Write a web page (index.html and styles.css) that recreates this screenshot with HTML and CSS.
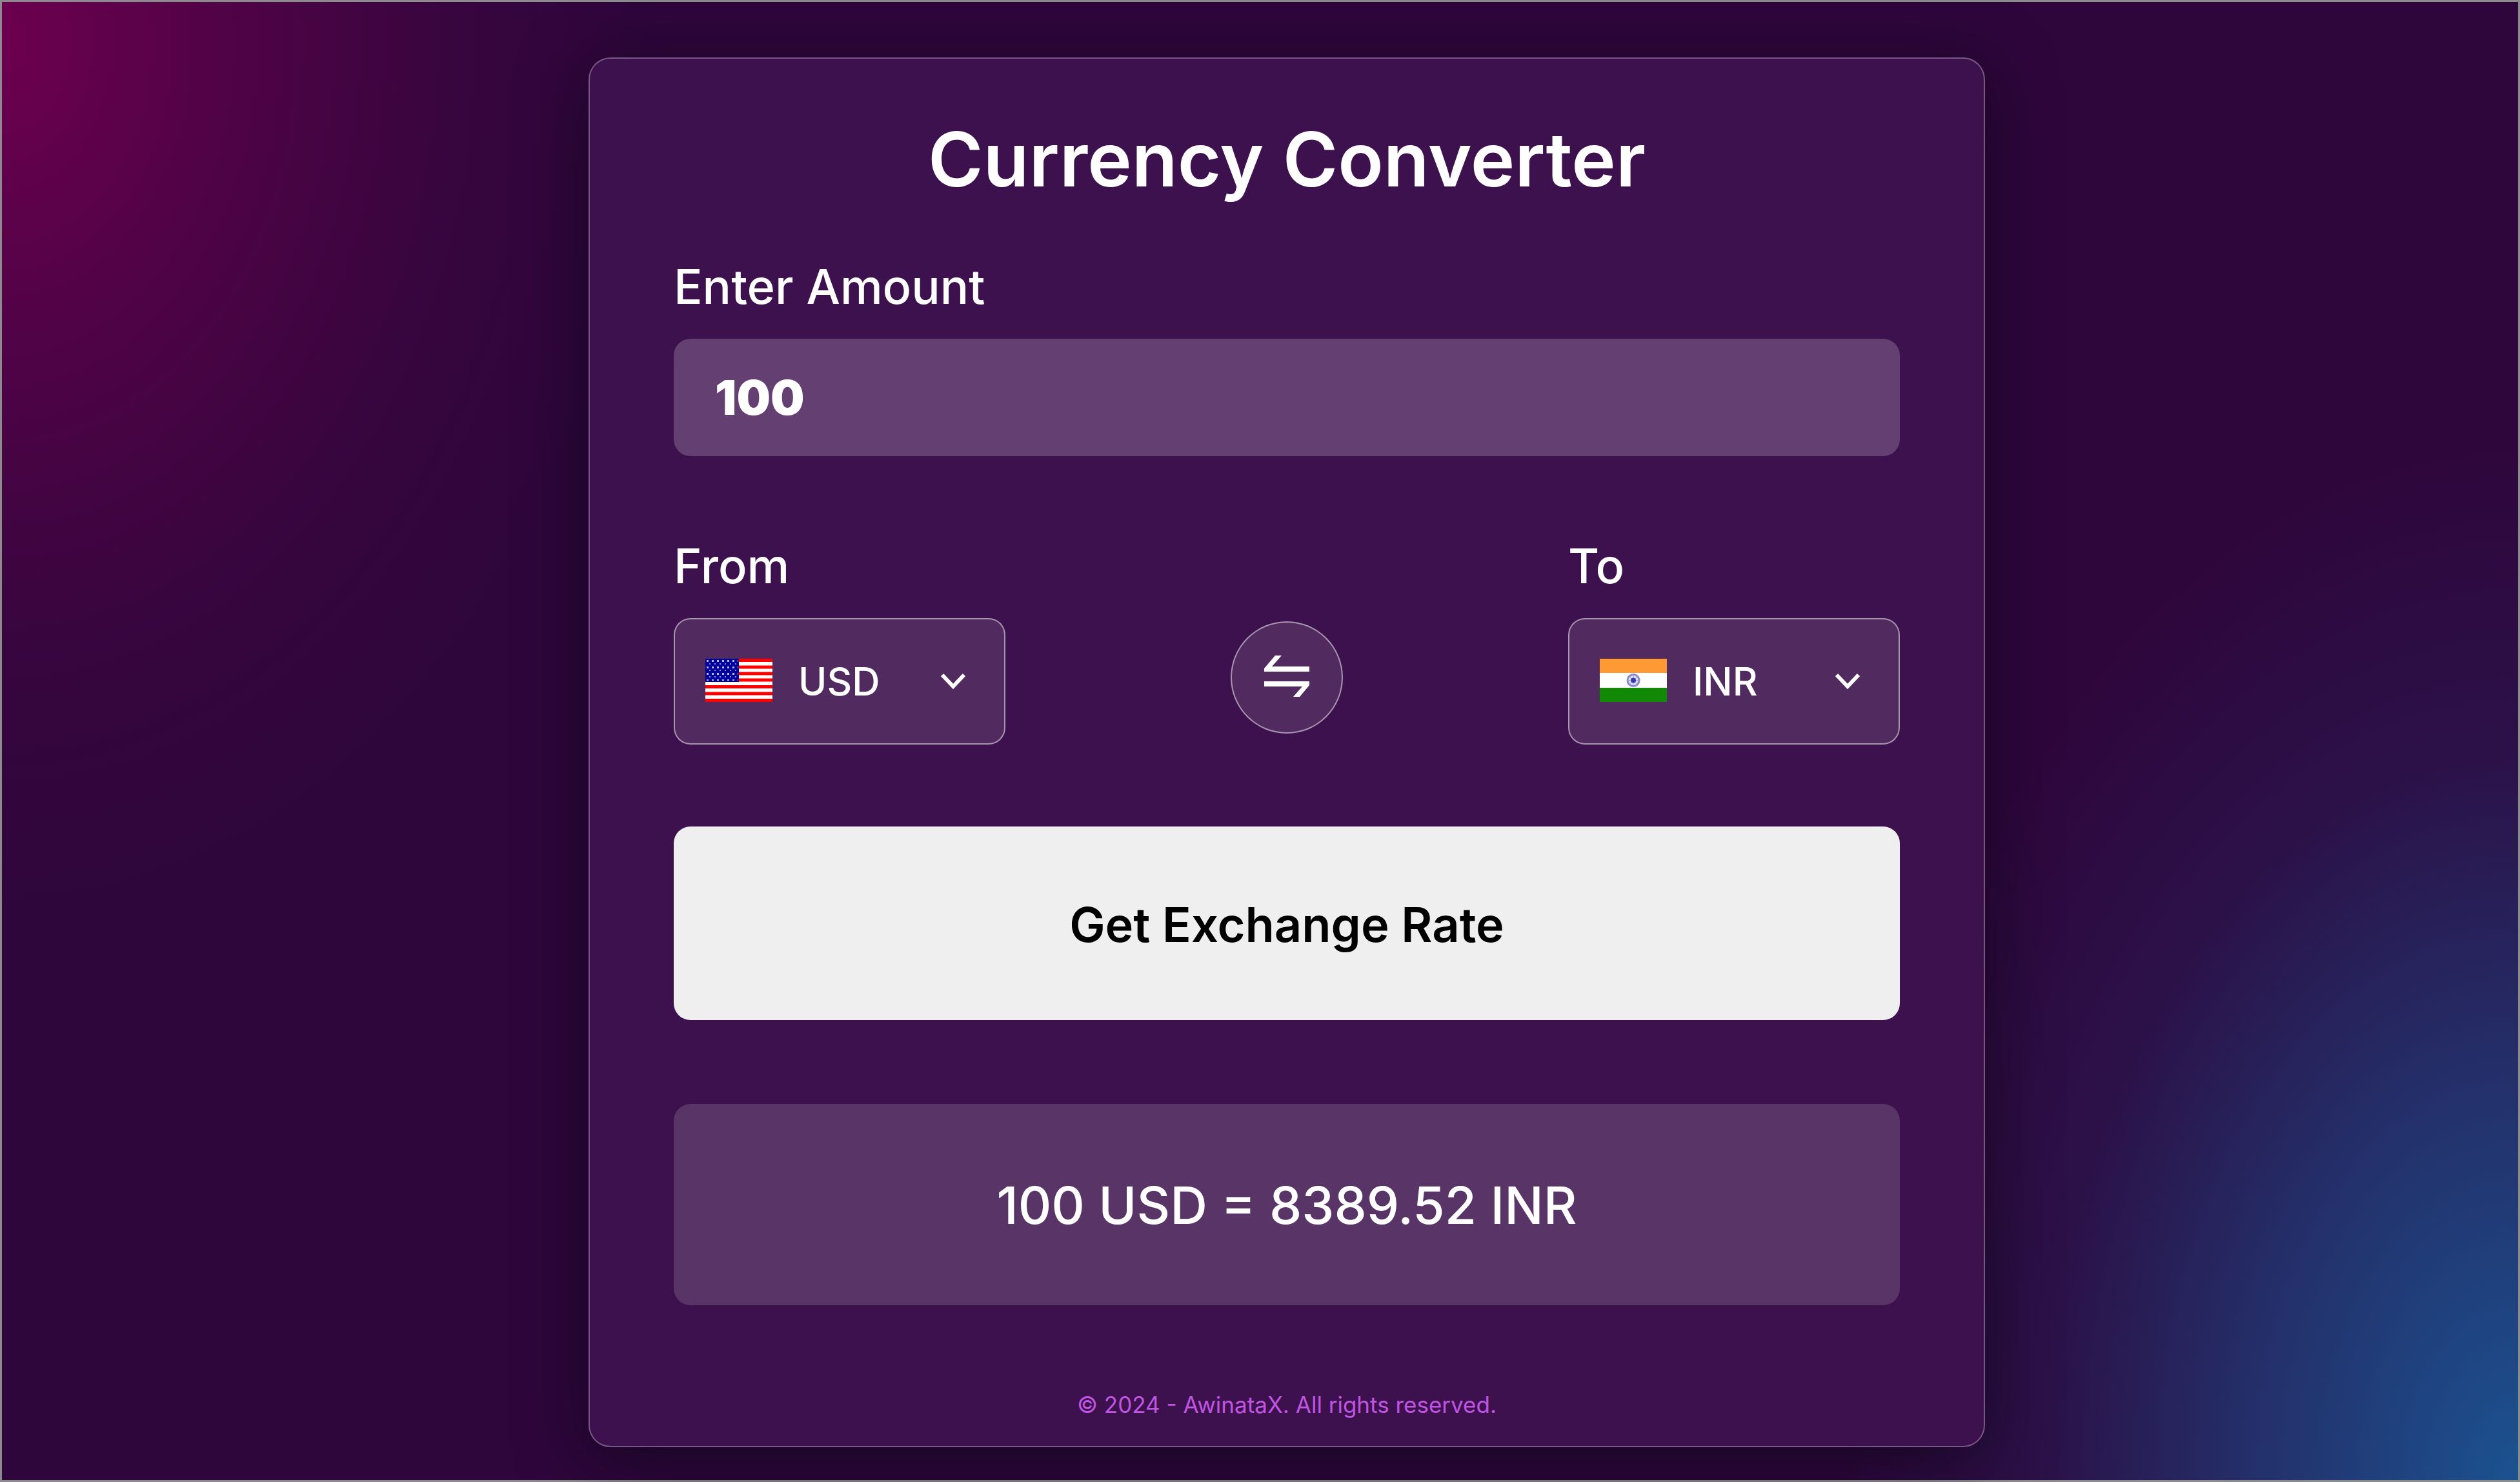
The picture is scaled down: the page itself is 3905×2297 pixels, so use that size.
FILE: index.html
```html
<!DOCTYPE html>
<html lang="en">
<head>
<meta charset="utf-8">
<title>Currency Converter</title>
<meta name="viewport" content="width=device-width, initial-scale=1">
<link rel="stylesheet" href="styles.css">
</head>
<body>
<main class="page">
  <form class="card">
    <h1 class="title">Currency Converter</h1>

    <div class="field">
      <label class="label" for="amount">Enter Amount</label>
      <input class="amount" id="amount" type="text" inputmode="decimal" value="100">
    </div>

    <div class="pair">
      <div class="field">
        <label class="label" for="from">From</label>
        <div class="picker">
          <svg class="flag" viewBox="0 0 104 67" aria-hidden="true">
            <defs>
              <pattern id="stars" width="8" height="10" patternUnits="userSpaceOnUse">
                <rect x="2" y="2" width="3" height="3" fill="#b9b9ee"/>
                <rect x="6" y="7" width="2" height="2" fill="#8f8fe0"/>
              </pattern>
            </defs>
            <rect width="104" height="67" fill="#fff"/>
            <path d="M0 2.5h104M0 13h104M0 23h104M0 33h104M0 43.500h104M0 54h104M0 64.500h104" stroke="#f00" stroke-width="5.200"/>
            <rect width="52" height="36" fill="#00009c"/>
            <rect x="1" y="2" width="50" height="32" fill="url(#stars)"/>
          </svg>
          <select class="currency" id="from">
            <option selected>USD</option>
            <option>INR</option>
          </select>
          <svg class="chevron" viewBox="0 0 40 26" aria-hidden="true"><path d="M3 3l17 18L37 3"/></svg>
        </div>
      </div>

      <button class="swap" type="button" aria-label="Swap currencies">
        <svg class="swap-icon" viewBox="0 0 70 64" aria-hidden="true">
          <path d="M0 25V20L17 0h10L12 17h58v8zM0 40h70v6L55 64H45L59 48H0z"/>
        </svg>
      </button>

      <div class="field">
        <label class="label" for="to">To</label>
        <div class="picker">
          <svg class="flag" viewBox="0 0 104 67" aria-hidden="true">
            <rect width="104" height="67" fill="#fff"/>
            <rect width="104" height="22" fill="#f93"/>
            <rect y="45" width="104" height="22" fill="#128807"/>
            <circle cx="52" cy="33.500" r="9" fill="#e4e4f5" stroke="#8888d0" stroke-width="3"/>
            <path d="M52 25v17M43 33.500h18M46 27.500l12 12M58 27.500l-12 12" stroke="#a0a0dc"/>
            <circle cx="52" cy="33.500" r="4" fill="#3a3aaa"/>
          </svg>
          <select class="currency" id="to">
            <option>USD</option>
            <option selected>INR</option>
          </select>
          <svg class="chevron" viewBox="0 0 40 26" aria-hidden="true"><path d="M3 3l17 18L37 3"/></svg>
        </div>
      </div>
    </div>

    <button class="submit" type="button">Get Exchange Rate</button>

    <output class="result" for="amount from to">100 USD = 8389.52 INR</output>

    <footer class="footer">© 2024 - AwinataX. All rights reserved.</footer>
  </form>
</main>
</body>
</html>
```

FILE: styles.css
```css
*,
*::before,
*::after {
  box-sizing: border-box;
}

body {
  margin: 0;
  font-family: Inter, "Open Sans", sans-serif;
  color: #fff;
}

.page {
  display: flex;
  justify-content: center;
  align-items: flex-start;
  min-height: 100vh;
  padding: 86px 0 50px 83px;
  border: 3px solid #8b8b8b;
  background:
    radial-gradient(1000px 1350px at 0 60px, #6d004f 0, rgba(109, 0, 79, 0.5) 38%, rgba(109, 0, 79, 0.15) 70%, rgba(109, 0, 79, 0) 100%),
    radial-gradient(1050px 1600px at 100% 100%, #1b5290 0, rgba(27, 82, 144, 0.56) 38%, rgba(27, 82, 144, 0.15) 70%, rgba(27, 82, 144, 0) 100%),
    #2e063c;
}

.card {
  display: flex;
  flex-direction: column;
  width: 100%;
  max-width: 2164px;
  padding: 88px 130px 40px;
  border: 2px solid rgba(255, 255, 255, 0.3);
  border-radius: 34px;
  background: #3d114d;
  box-shadow: 0 20px 104px rgba(8, 7, 16, 0.6);
}

.title {
  margin: 0 0 82px;
  font-size: 116px;
  line-height: 136px;
  font-weight: 600;
  text-align: center;
}

.field {
  display: flex;
  flex-direction: column;
  gap: 34px;
}

.label {
  font-size: 74px;
  line-height: 94px;
  font-weight: 500;
}

.amount {
  width: 100%;
  height: 182px;
  padding: 0 64px;
  border: 0;
  border-radius: 26px;
  background: #643f71;
  font: 900 74px/100px Inter, sans-serif;
  color: #fff;
}

.pair {
  display: flex;
  justify-content: space-between;
  align-items: flex-end;
  margin: 123px 0 127px;
}

.picker {
  display: grid;
  grid-template-columns: 104px 1fr 40px;
  align-items: center;
  width: 514px;
  height: 196px;
  padding: 0 59px 0 47px;
  border: 2px solid rgba(255, 255, 255, 0.5);
  border-radius: 26px;
  background: #512a5f;
}

.flag {
  grid-area: 1 / 1;
  width: 104px;
  height: 67px;
  margin-bottom: 4px;
}

.currency {
  grid-area: 1 / 1 / 2 / 4;
  width: 100%;
  height: 100%;
  padding: 0 0 0 144px;
  border: 0;
  background: transparent;
  font: 500 60px/80px Inter, sans-serif;
  color: #fff;
  appearance: none;
}

.currency option {
  color: #000;
}

.chevron {
  grid-area: 1 / 3;
  width: 40px;
  height: 26px;
  fill: none;
  stroke: #fff;
  stroke-width: 6;
  pointer-events: none;
}

.swap {
  display: flex;
  justify-content: center;
  align-items: center;
  width: 174px;
  height: 174px;
  margin-bottom: 17px;
  padding: 0 0 4px;
  border: 2px solid rgba(255, 255, 255, 0.5);
  border-radius: 50%;
  background: #512a5f;
}

.swap-icon {
  width: 70px;
  height: 64px;
  fill: #fff;
}

.submit {
  height: 300px;
  padding: 4px 0 0;
  border: 0;
  border-radius: 26px;
  background: #efefef;
  font: 600 74px/94px Inter, sans-serif;
  color: #000;
}

.result {
  display: block;
  margin: 130px 0;
  padding: 107px 0 105px;
  border-radius: 26px;
  background: #593567;
  font-size: 80px;
  line-height: 100px;
  font-weight: 500;
  text-align: center;
}

.footer {
  font-size: 35px;
  line-height: 48px;
  text-align: center;
  color: #c055e2;
}
```
